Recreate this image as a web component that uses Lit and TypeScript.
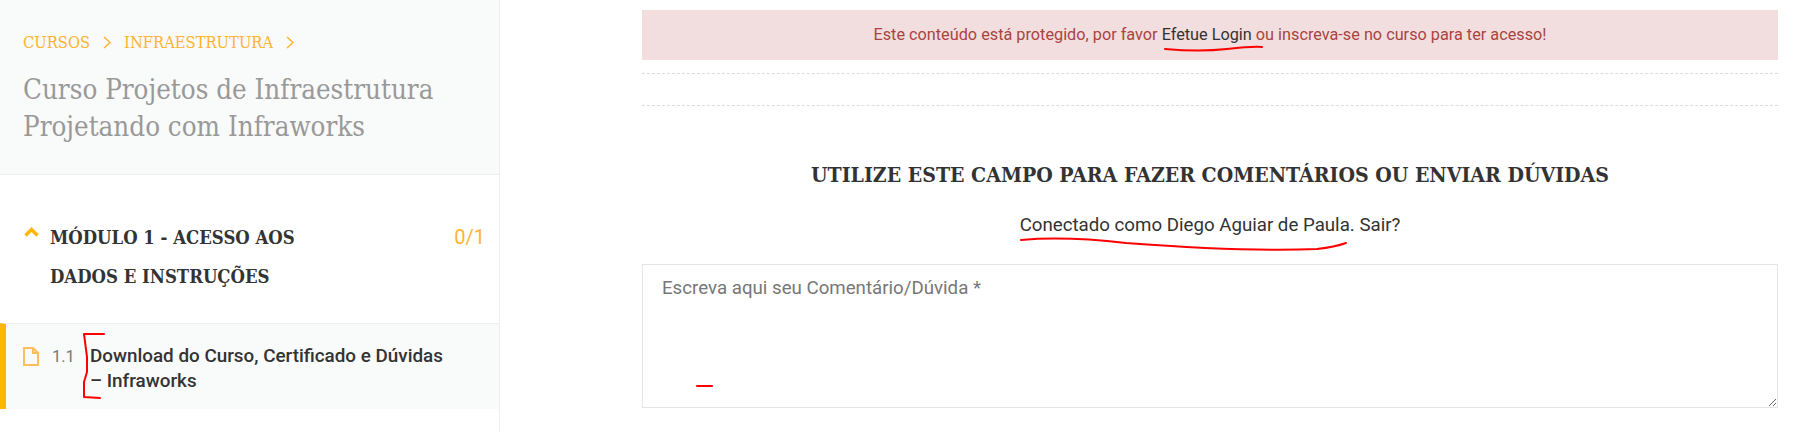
import { LitElement, css, html, svg } from "lit";

// marcas vermelhas feitas à mão por cima da captura
const MARKS = [
  "M104 334 L84 334 L87 357 L87 372 L84 382 L84 397 L100 398",
  "M1165 49 Q1200 52 1227 49 T1262 47",
  "M1021 240 Q1065 236 1126 243 Q1246 252 1317 249 Q1335 247 1346 243",
  "M697 386 L712 386",
];

export class AppRoot extends LitElement {
  static styles = css`
    :host {
      display: block;
      position: relative;
      height: 432px;
      overflow: hidden;
      background: #fff;
      font-family: Roboto, sans-serif;
      color: #333;
    }

    .page {
      display: flex;
      height: 100%;
    }

    .sidebar {
      flex: 0 0 500px;
      box-sizing: border-box;
      border-right: 1px solid #eee;
    }

    .slab {
      font-family: "DejaVu Serif", serif;
      font-stretch: condensed;
    }

    .course {
      box-sizing: border-box;
      height: 175px;
      padding: 31px 23px 0;
      background: #f9fafa;
      border-bottom: 1px solid #eee;
    }

    .crumbs {
      display: flex;
      align-items: center;
      height: 22px;
      font-size: 16.4px;
      color: #ffb32e;
    }

    .crumbs svg {
      width: 8px;
      height: 13px;
      margin: 0 13px;
    }

    .course h1 {
      margin: 18px 0 0;
      font-size: 27.5px;
      line-height: 37px;
      font-weight: 400;
      color: #999;
    }

    .module {
      display: flex;
      box-sizing: border-box;
      height: 148px;
      padding: 43px 14px 0 24px;
    }

    .module .chev {
      flex: none;
      width: 15px;
      height: 10px;
      margin: 9px 11px 0 0;
    }

    .module h2 {
      flex: 1;
      margin: 0;
      font-size: 18.4px;
      line-height: 39px;
      font-weight: 700;
      color: #333;
    }

    .module .count {
      font-size: 20px;
      line-height: 39px;
      font-weight: 400;
      color: #ffb32e;
    }

    .lesson {
      display: flex;
      box-sizing: border-box;
      height: 86px;
      padding: 20px 50px 0 17px;
      background: #f9fafa;
      border-top: 1px solid #eee;
      border-left: 6px solid #ffb606;
    }

    .lesson svg {
      flex: none;
      width: 16px;
      height: 19px;
      margin-top: 3px;
    }

    .lesson .num {
      flex: none;
      width: 38px;
      margin-left: 13px;
      font-size: 16.5px;
      line-height: 25px;
      color: #777;
    }

    .lesson .title {
      font-size: 18.85px;
      line-height: 25px;
      font-weight: 500;
      color: #333;
    }

    main {
      flex: 1;
      min-width: 0;
      padding: 10px 22px 0 142px;
    }

    .alert {
      height: 50px;
      line-height: 50px;
      text-align: center;
      font-size: 16.25px;
      color: #a94442;
      background: #f2dede;
    }

    .alert a {
      color: #333;
    }

    .rule {
      height: 31px;
      margin-top: 13px;
      border-top: 1px dashed #ddd;
      border-bottom: 1px dashed #ddd;
    }

    h3 {
      margin: 53px 0 0;
      text-align: center;
      font-size: 21.1px;
      line-height: 32px;
      font-weight: 700;
      color: #333;
    }

    .logged {
      margin: 21px 0 0;
      text-align: center;
      font-size: 18.7px;
      line-height: 26px;
      color: #333;
    }

    textarea {
      display: block;
      box-sizing: border-box;
      width: 100%;
      height: 144px;
      margin-top: 26px;
      padding: 10px 19px;
      border: 1px solid #e5e5e5;
      border-radius: 0;
      outline: none;
      font-family: Roboto, sans-serif;
      font-size: 18.7px;
      line-height: 27px;
    }

    textarea::placeholder {
      color: #777;
      opacity: 1;
    }

    .marks {
      position: absolute;
      inset: 0;
      width: 1800px;
      height: 432px;
      pointer-events: none;
    }

    .marks path {
      fill: none;
      stroke: #f00;
      stroke-width: 2;
      stroke-linecap: round;
      stroke-linejoin: round;
    }
  `;

  renderCrumbChevron() {
    return html`<svg viewBox="0 0 8 13" fill="none" stroke="#ffb32e" stroke-width="1.5">
      <path d="M1 1 L7 6.5 L1 12" />
    </svg>`;
  }

  render() {
    return html`
      <div class="page">
        <aside class="sidebar">
          <div class="course">
            <div class="crumbs slab">
              <span>CURSOS</span>${this.renderCrumbChevron()}
              <span>INFRAESTRUTURA</span>${this.renderCrumbChevron()}
            </div>
            <h1 class="slab">Curso Projetos de Infraestrutura Projetando com Infraworks</h1>
          </div>
          <div class="module">
            <svg class="chev" viewBox="0 0 15 10" fill="none" stroke="#ffb606" stroke-width="3.4">
              <path d="M1.5 8.5 L7.5 2.5 L13.5 8.5" />
            </svg>
            <h2 class="slab">MÓDULO 1 - ACESSO AOS<br />DADOS E INSTRUÇÕES</h2>
            <span class="count">0/1</span>
          </div>
          <div class="lesson">
            <svg viewBox="0 0 16 19" fill="none" stroke="#ffbe5c" stroke-width="2">
              <path d="M1 1 H10 L15 6 V18 H1 Z" />
              <path d="M10 1 V6 H15" />
            </svg>
            <span class="num">1.1</span>
            <span class="title">Download do Curso, Certificado e Dúvidas – Infraworks</span>
          </div>
        </aside>
        <main>
          <div class="alert">
            Este conteúdo está protegido, por favor <a>Efetue Login</a> ou inscreva-se no curso para ter acesso!
          </div>
          <div class="rule"></div>
          <h3 class="slab">UTILIZE ESTE CAMPO PARA FAZER COMENTÁRIOS OU ENVIAR DÚVIDAS</h3>
          <p class="logged">Conectado como Diego Aguiar de Paula. Sair?</p>
          <textarea placeholder="Escreva aqui seu Comentário/Dúvida *"></textarea>
        </main>
      </div>
      <svg class="marks" viewBox="0 0 1800 432">
        ${MARKS.map((d) => svg`<path d=${d} />`)}
      </svg>
    `;
  }
}

customElements.define("app-root", AppRoot);
